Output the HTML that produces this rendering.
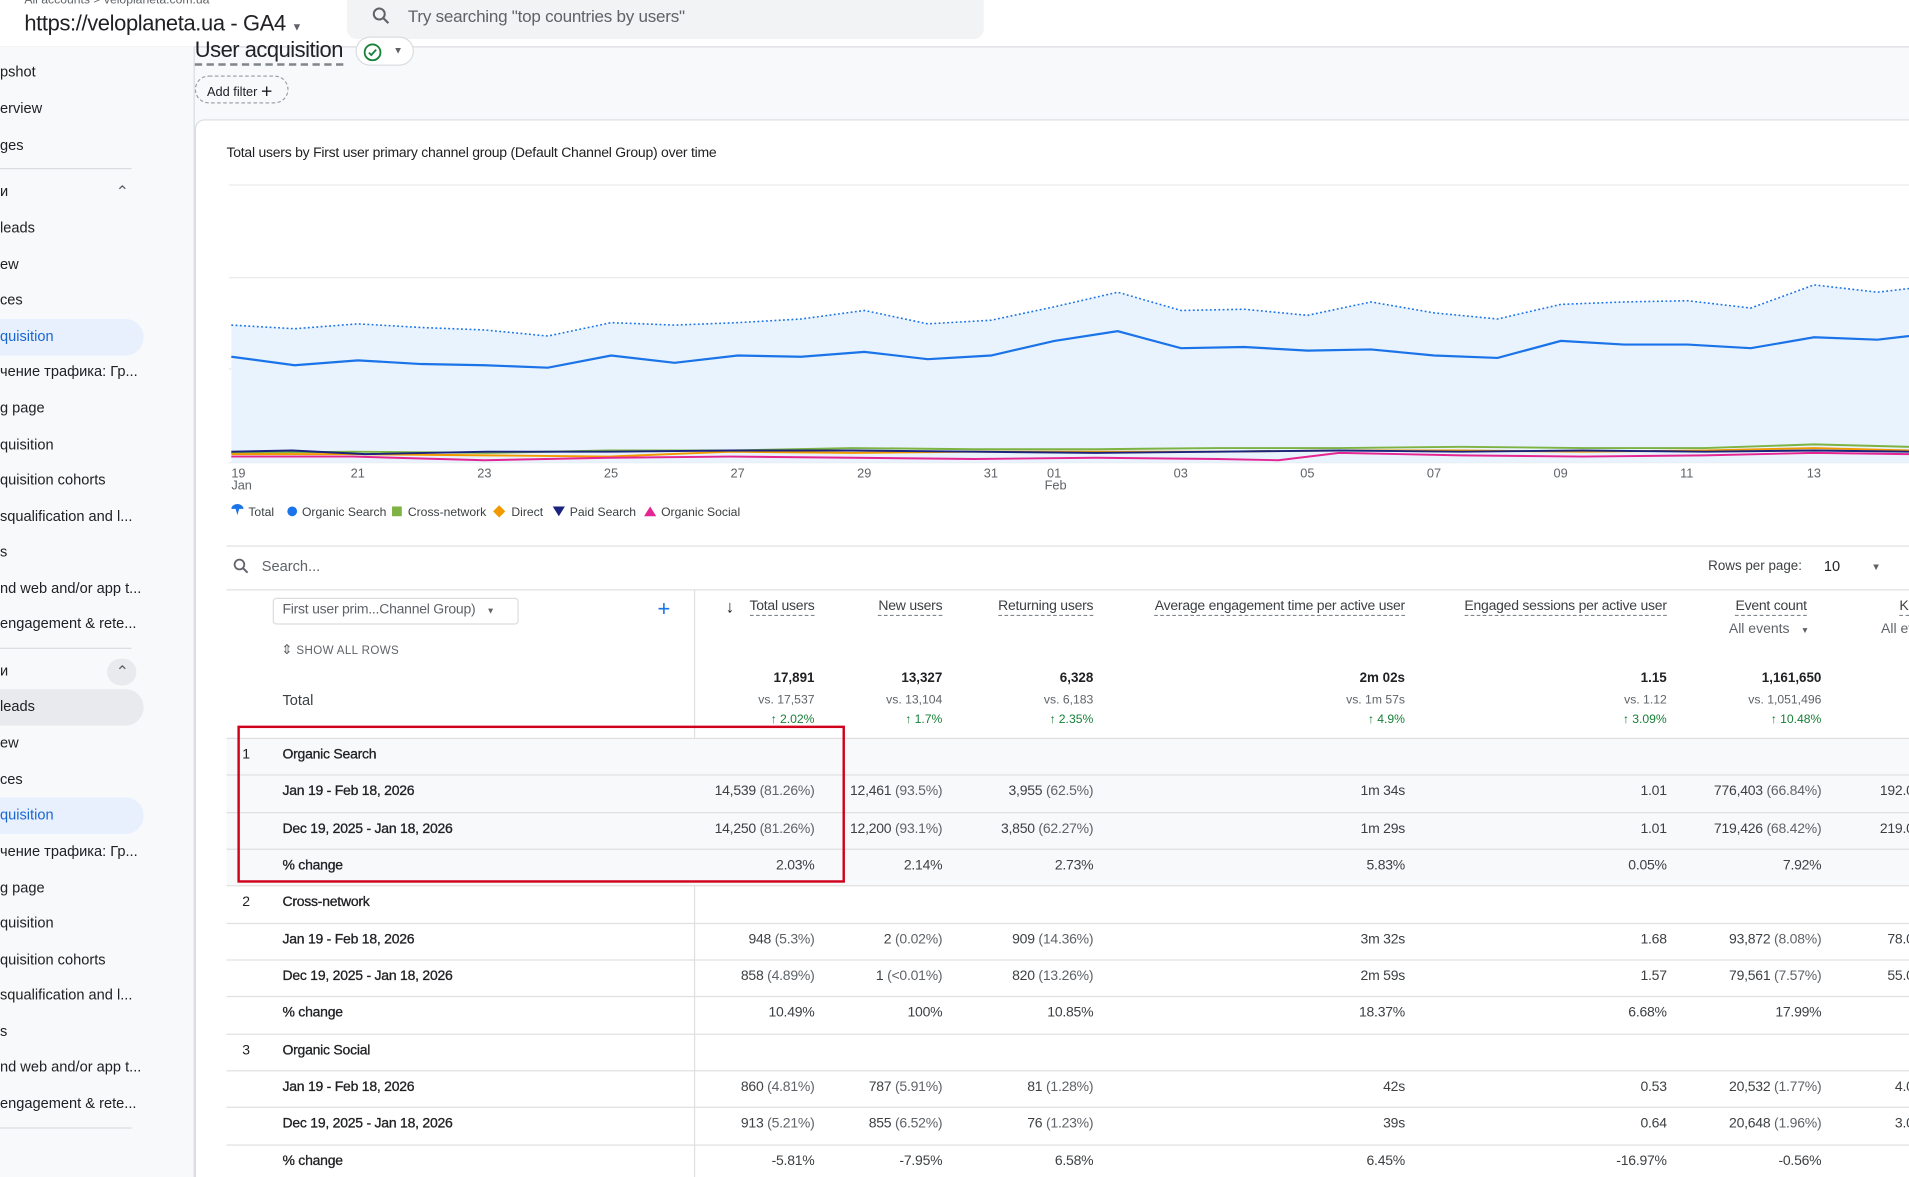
<!DOCTYPE html>
<html><head><meta charset="utf-8">
<style>
*{box-sizing:border-box;margin:0;padding:0}
html,body{width:1909px;height:1177px;overflow:hidden;background:#f8f9fa}
#w{position:absolute;left:0;top:0;width:1568px;height:967px;transform:scale(1.2175);transform-origin:0 0;font-family:"Liberation Sans","Noto Sans CJK SC",sans-serif;color:#202124;font-size:12px;overflow:hidden}
.a{position:absolute;white-space:nowrap}
.r{position:absolute;white-space:nowrap;text-align:right}
.g{color:#5f6368}
.sb{position:absolute;left:0;top:38px;width:160px;height:929px;background:#f8f9fa;border-right:1px solid #dadce0}
.si{position:absolute;left:0;font-size:12px;color:#202124}
.pill{position:absolute;left:-20px;width:138px;height:30px;border-radius:15px}
.hl{position:absolute;height:1px;background:#e0e0e0}
.dh{border-bottom:1px dashed #80868b;padding-bottom:1px}
.up{color:#188038}
</style></head><body><div id="w">
<div class="a" style="left:0;top:0;width:1568px;height:39px;background:#fff;border-bottom:1px solid #dadce0"></div>
<div class="a g" style="left:20px;top:-5px;font-size:10px">All accounts &gt; veloplaneta.com.ua</div>
<div class="a" style="left:20px;top:9px;font-size:18px;color:#202124;letter-spacing:-0.3px">https://veloplaneta.ua - GA4 <span style="font-size:9px;color:#5f6368">▼</span></div>
<div class="a" style="left:285px;top:-2px;width:523px;height:34px;background:#f1f3f4;border-radius:0 0 8px 8px"></div>
<svg class="a" style="left:304px;top:4px" width="18" height="18" viewBox="0 0 24 24"><circle cx="10" cy="10" r="6" fill="none" stroke="#5f6368" stroke-width="2.2"/><path d="M14.5 14.5L20 20" stroke="#5f6368" stroke-width="2.4"/></svg>
<div class="a" style="left:335px;top:5px;font-size:14px;color:#5f6368;letter-spacing:-0.2px">Try searching "top countries by users"</div>
<div class="sb"></div>
<div class="pill" style="top:262px;background:#e8f0fe"></div>
<div class="pill" style="top:566px;background:#e8eaed"></div>
<div class="pill" style="top:655px;background:#e8f0fe"></div>
<div class="a" style="left:88px;top:541px;width:24px;height:22px;border-radius:11px;background:#e8eaed"></div>
<div class="hl" style="left:0;top:138px;width:108px;background:#dadce0"></div>
<div class="hl" style="left:0;top:532px;width:108px;background:#dadce0"></div>
<div class="hl" style="left:0;top:926px;width:108px;background:#dadce0"></div>
<div class="a" style="left:95px;top:150px;font-size:13px;color:#5f6368">⌃</div>
<div class="a" style="left:95px;top:544px;font-size:13px;color:#5f6368">⌃</div>
<div id="side"></div>
<div class="a" style="left:160px;top:31px;font-size:18px;color:#202124;border-bottom:2px dashed #80868b;line-height:21px;letter-spacing:-0.4px">User acquisition</div>
<div class="a" style="left:292px;top:30px;width:48px;height:24px;border:1px solid #dadce0;border-radius:12px;background:#fff"></div>
<svg class="a" style="left:298px;top:35px" width="16" height="16" viewBox="0 0 16 16"><circle cx="8" cy="8" r="6.5" fill="none" stroke="#188038" stroke-width="1.5"/><path d="M5 8.2l2 2 4-4.5" fill="none" stroke="#188038" stroke-width="1.5"/></svg>
<div class="a" style="left:323px;top:37px;font-size:8px;color:#5f6368">▼</div>
<div class="a" style="left:160px;top:62px;width:77px;height:23px;border:1px dashed #9aa0a6;border-radius:12px"></div>
<div class="a" style="left:170px;top:66px;font-size:10.5px">Add filter <span style="font-size:16px;position:relative;top:1px">+</span></div>
<div class="a" style="left:160px;top:98px;width:1420px;height:880px;background:#fff;border:1px solid #dadce0;border-radius:8px 0 0 0"></div>
<div class="a" style="left:186px;top:120px;font-size:11.5px;letter-spacing:-0.2px">Total users by First user primary channel group (Default Channel Group) over time</div>
<svg class="a" style="left:0;top:0" width="1568" height="440">
<g stroke="#e8eaed" stroke-width="1"><line x1="188" y1="152" x2="1568" y2="152"/><line x1="188" y1="228" x2="1568" y2="228"/><line x1="188" y1="303" x2="1568" y2="303"/><line x1="188" y1="380" x2="1568" y2="380"/></g>
<polygon fill="#e8f3fd" points="190,267 242,270 294,266 346,269 398,271 450,276 502,265 554,267 606,265 658,262 710,255 762,266 814,263 866,252 918,240 970,255 1022,254 1074,259 1126,248 1178,257 1230,262 1282,250 1334,248 1386,247 1438,253 1490,234 1542,240 1568,237 1568,380 190,380"/>
<polyline fill="none" stroke="#1a73e8" stroke-width="1.3" stroke-dasharray="1.5,2" points="190,267 242,270 294,266 346,269 398,271 450,276 502,265 554,267 606,265 658,262 710,255 762,266 814,263 866,252 918,240 970,255 1022,254 1074,259 1126,248 1178,257 1230,262 1282,250 1334,248 1386,247 1438,253 1490,234 1542,240 1568,237"/>
<polyline fill="none" stroke="#1a73e8" stroke-width="1.8" points="190,293 242,300 294,296 346,299 398,300 450,302 502,292 554,298 606,292 658,293 710,289 762,295 814,292 866,280 918,272 970,286 1022,285 1074,288 1126,287 1178,292 1230,294 1282,280 1334,283 1386,283 1438,286 1490,277 1542,279 1568,276"/>
<polyline fill="none" stroke="#7cb342" stroke-width="1.6" points="190,372 290,371 400,372 500,370 600,370 700,368 800,369 900,369 1000,368 1100,368 1200,367 1300,368 1400,368 1490,365 1568,367"/>
<polyline fill="none" stroke="#f29900" stroke-width="1.6" points="190,373 290,373 400,374 500,375 600,371 700,372 800,371 900,371 1000,371 1100,370 1200,370 1300,371 1400,370 1490,368 1568,370"/>
<polyline fill="none" stroke="#1a237e" stroke-width="1.6" points="190,371 240,370 300,373 400,371 500,371 600,370 700,370 800,371 900,372 1000,371 1100,370 1200,371 1300,370 1400,371 1490,370 1568,371"/>
<polyline fill="none" stroke="#e52592" stroke-width="1.6" points="190,375 290,375 398,378 500,376 600,375 700,376 800,377 900,376 1000,377 1050,378 1100,372 1200,374 1300,375 1400,374 1490,372 1568,373"/>
<g font-family="Liberation Sans" font-size="10.5" fill="#5f6368">
<text x="190" y="392">19</text><text x="190" y="402">Jan</text><text x="288" y="392">21</text><text x="392" y="392">23</text><text x="496" y="392">25</text><text x="600" y="392">27</text><text x="704" y="392">29</text><text x="808" y="392">31</text><text x="860" y="392">01</text><text x="858" y="402">Feb</text><text x="964" y="392">03</text><text x="1068" y="392">05</text><text x="1172" y="392">07</text><text x="1276" y="392">09</text><text x="1380" y="392">11</text><text x="1484" y="392">13</text>
</g>
<g font-family="Liberation Sans" font-size="10" fill="#3c4043">
<path d="M190 418a5 4 0 0 1 10 0h-3.5l-1.5 5l-1.5-5z" fill="#1a73e8"/><text x="204" y="424">Total</text>
<circle cx="240" cy="420" r="4" fill="#1a73e8"/><text x="248" y="424">Organic Search</text>
<rect x="322" y="416" width="8" height="8" fill="#7cb342"/><text x="335" y="424">Cross-network</text>
<path d="M410 415l5 5-5 5-5-5z" fill="#f29900"/><text x="420" y="424">Direct</text>
<path d="M454 416h10l-5 8z" fill="#1a237e"/><text x="468" y="424">Paid Search</text>
<path d="M534 416l5 8h-10z" fill="#e52592"/><text x="543" y="424">Organic Social</text>
</g>
</svg>
<div class="hl" style="left:186px;top:448px;width:1382px"></div>
<svg class="a" style="left:190px;top:457px" width="16" height="16" viewBox="0 0 24 24"><circle cx="10" cy="10" r="6" fill="none" stroke="#5f6368" stroke-width="2.2"/><path d="M14.5 14.5L20 20" stroke="#5f6368" stroke-width="2.4"/></svg>
<div class="a g" style="left:215px;top:458px;font-size:12px">Search...</div>
<div class="a" style="left:1403px;top:459px;font-size:11px;color:#3c4043">Rows per page:</div>
<div class="a" style="left:1498px;top:458px;font-size:12px">10</div>
<div class="a g" style="left:1537px;top:461px;font-size:8px">▼</div>
<div class="hl" style="left:186px;top:484px;width:1382px"></div>
<div class="a" style="left:570px;top:484px;width:1px;height:490px;background:#e0e0e0"></div>
<div class="a" style="left:224px;top:491px;width:202px;height:22px;border:1px solid #dadce0;border-radius:3px"></div>
<div class="a g" style="left:232px;top:495px;font-size:11.5px;letter-spacing:-0.2px">First user prim...Channel Group) <span style="font-size:7px;margin-left:6px">▼</span></div>
<div class="a" style="left:540px;top:490px;font-size:18px;color:#1a73e8">+</div>
<div class="a g" style="left:231px;top:527px;font-size:9.5px;letter-spacing:.3px"><span style="font-size:11px">⇕</span> SHOW ALL ROWS</div>
<div class="a" style="left:232px;top:568px;font-size:12px;color:#3c4043">Total</div>
<div id="hdr"></div>
<div id="rows"></div>
<div class="a" style="left:195px;top:596px;width:499px;height:129px;border:2px solid #d0021b"></div>
</div>
<script>
var side=[[60,"pshot"],[90,"erview"],[120,"ges"],[158,"и"],[188,"leads"],[218,"ew"],[247,"ces"],[277,"quisition",1],[306,"чение трафика: Гр..."],[336,"g page"],[366,"quisition"],[395,"quisition cohorts"],[425,"squalification and l..."],[454,"s"],[484,"nd web and/or app t..."],[513,"engagement &amp; rete..."],[552,"и"],[581,"leads"],[611,"ew"],[641,"ces"],[670,"quisition",1],[700,"чение трафика: Гр..."],[730,"g page"],[759,"quisition"],[789,"quisition cohorts"],[818,"squalification and l..."],[848,"s"],[877,"nd web and/or app t..."],[907,"engagement &amp; rete..."]];
var h="";side.forEach(function(s){h+='<div class="si" style="top:'+(s[0]-8)+'px;'+(s[2]?'color:#1967d2':'')+'">'+s[1]+'</div>'});
document.getElementById("side").innerHTML=h;
var R=[669,774,898,1154,1369,1496,1578];
function R_(x){return 1568-x}
var hd=[["Total users",669],["New users",774],["Returning users",898],["Average engagement time per active user",1154],["Engaged sessions per active user",1369],["Event count",1484],["Key events",1615]];
h="";hd.forEach(function(c){h+='<div class="r" style="right:'+R_(c[1])+'px;top:492px;font-size:11.5px;color:#3c4043;letter-spacing:-0.2px"><span class="dh">'+c[0]+'</span></div>'});
h+='<div class="a" style="left:596px;top:490px;font-size:14px">↓</div>';
h+='<div class="r g" style="right:'+R_(1486)+'px;top:511px;font-size:11.5px">All events <span style="font-size:7px;margin-left:6px">▼</span></div>';
h+='<div class="a g" style="left:1545px;top:511px;font-size:11.5px">All events</div>';
var tot=[["17,891","vs. 17,537","2.02%"],["13,327","vs. 13,104","1.7%"],["6,328","vs. 6,183","2.35%"],["2m 02s","vs. 1m 57s","4.9%"],["1.15","vs. 1.12","3.09%"],["1,161,650","vs. 1,051,496","10.48%"]];
tot.forEach(function(t,i){var r=R_(R[i]);h+='<div class="r" style="right:'+r+'px;top:551px;font-size:11px;font-weight:bold">'+t[0]+'</div><div class="r g" style="right:'+r+'px;top:570px;font-size:10px">'+t[1]+'</div><div class="r up" style="right:'+r+'px;top:586px;font-size:10px">↑ '+t[2]+'</div>'});
document.getElementById("hdr").innerHTML=h;
function v(a,b){return a+(b?' <span class="g">('+b+')</span>':'')}
var data=[
["1","Organic Search"],
[0,"Jan 19 - Feb 18, 2026",["14,539","81.26%"],["12,461","93.5%"],["3,955","62.5%"],["1m 34s"],["1.01"],["776,403","66.84%"],["192.00"]],
[0,"Dec 19, 2025 - Jan 18, 2026",["14,250","81.26%"],["12,200","93.1%"],["3,850","62.27%"],["1m 29s"],["1.01"],["719,426","68.42%"],["219.00"]],
[0,"% change",["2.03%"],["2.14%"],["2.73%"],["5.83%"],["0.05%"],["7.92%"],[""]],
["2","Cross-network"],
[0,"Jan 19 - Feb 18, 2026",["948","5.3%"],["2","0.02%"],["909","14.36%"],["3m 32s"],["1.68"],["93,872","8.08%"],["78.00"]],
[0,"Dec 19, 2025 - Jan 18, 2026",["858","4.89%"],["1","&lt;0.01%"],["820","13.26%"],["2m 59s"],["1.57"],["79,561","7.57%"],["55.00"]],
[0,"% change",["10.49%"],["100%"],["10.85%"],["18.37%"],["6.68%"],["17.99%"],[""]],
["3","Organic Social"],
[0,"Jan 19 - Feb 18, 2026",["860","4.81%"],["787","5.91%"],["81","1.28%"],["42s"],["0.53"],["20,532","1.77%"],["4.00"]],
[0,"Dec 19, 2025 - Jan 18, 2026",["913","5.21%"],["855","6.52%"],["76","1.23%"],["39s"],["0.64"],["20,648","1.96%"],["3.00"]],
[0,"% change",["-5.81%"],["-7.95%"],["6.58%"],["6.45%"],["-16.97%"],["-0.56%"],[""]]
];
h="";var y0=606,rh=30.33;
data.forEach(function(d,i){var top=y0+i*rh;
 if(i<4)h+='<div class="a" style="left:186px;top:'+top+'px;width:1382px;height:'+rh+'px;background:#f8f9fa"></div>';
 h+='<div class="hl" style="left:186px;top:'+top+'px;width:1382px"></div>';
 var ty=top+8;
 if(d[0])h+='<div class="a" style="left:199px;top:'+ty+'px;font-size:11.5px">'+d[0]+'</div>';
 h+='<div class="a" style="left:232px;top:'+ty+'px;font-size:11.5px;color:#202124;-webkit-text-stroke:.25px #202124;letter-spacing:-0.2px">'+d[1]+'</div>';
 for(var c=0;c<7;c++){if(d[c+2])h+='<div class="r" style="right:'+R_(R[c])+'px;top:'+ty+'px;font-size:11.5px;color:#3c4043;letter-spacing:-0.2px">'+v(d[c+2][0],d[c+2][1])+'</div>';}
});
h+='<div class="hl" style="left:186px;top:'+(y0+12*rh)+'px;width:1382px"></div>';
document.getElementById("rows").innerHTML=h;
</script>
</body></html>
